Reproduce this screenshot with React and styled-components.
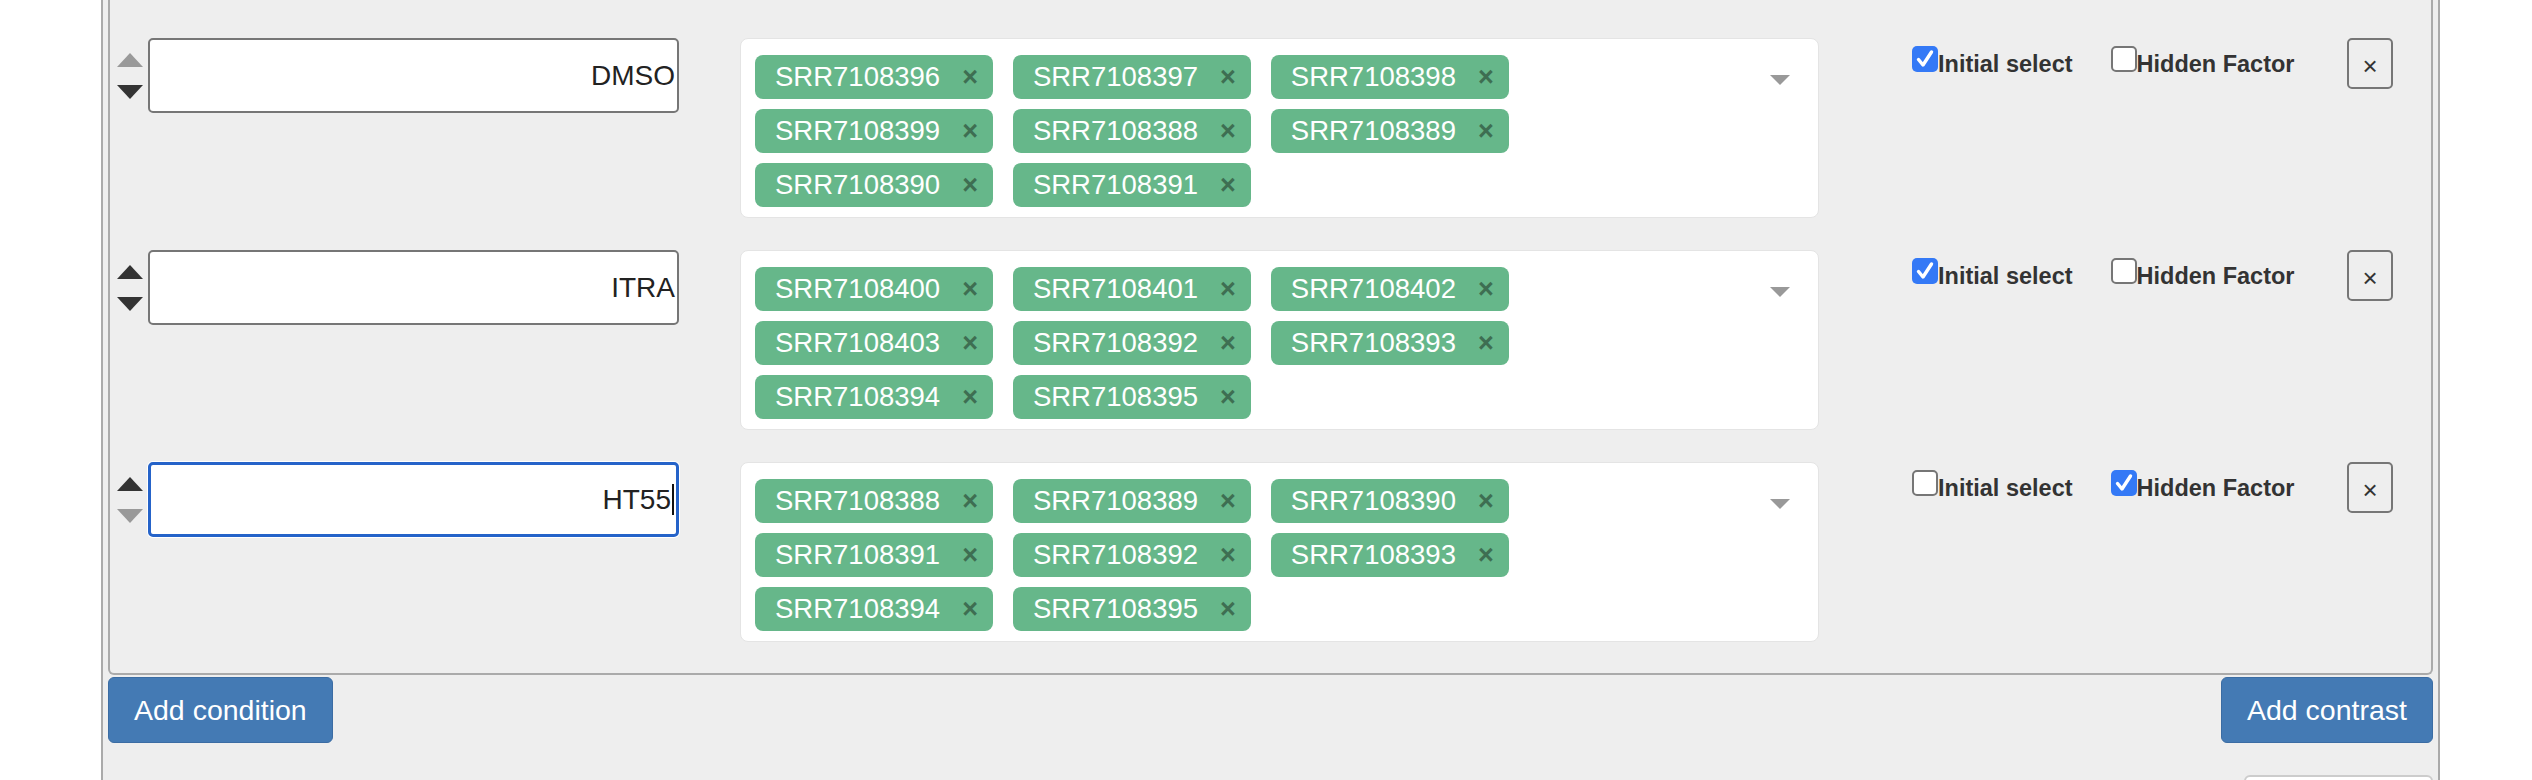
import React from 'react'
import styled, { createGlobalStyle } from 'styled-components'

const GlobalStyle = createGlobalStyle`
  body {
    margin: 0;
    background: #fff;
    font-family: 'Liberation Sans', Arial, sans-serif;
  }
`

const Page = styled.div`
  padding-left: 101px;
`

const Outer = styled.div`
  width: 2339px;
  min-height: 780px;
  box-sizing: border-box;
  border-left: 2px solid #aaa;
  border-right: 2px solid #aaa;
  background: #eee;
  padding: 0 5px;
`

const Panel = styled.div`
  border: 2px solid #aaa;
  border-top: none;
  border-radius: 0 0 6px 6px;
  padding: 38px 38px 31px 7px;
  display: flex;
  flex-direction: column;
  gap: 32px;
`

const Row = styled.div`
  display: flex;
  align-items: flex-start;
`

const Arrows = styled.div`
  width: 26px;
  flex-shrink: 0;
  display: flex;
  flex-direction: column;
  gap: 18px;
  padding-top: 15px;
`

const Arrow = styled.svg`
  display: block;
  width: 26px;
  height: 14px;
  fill: ${p => (p.$off ? '#999' : '#333')};
`

const Field = styled.div`
  margin-left: 5px;
  width: 531px;
  height: 75px;
  flex-shrink: 0;
  box-sizing: border-box;
  background: #fff;
  border: ${p => (p.$focus ? '3px solid #2563c9' : '2px solid #767676')};
  border-radius: 5px;
  box-shadow: ${p => (p.$focus ? '0 0 0 1px #fff' : 'none')};
  display: flex;
  align-items: center;
  justify-content: flex-end;
  padding-right: 2px;
  font-size: 28px;
  color: #222;
`

const Caret = styled.span`
  display: inline-block;
  width: 2px;
  height: 31px;
  background: #111;
  margin-left: 1px;
`

const Select = styled.div`
  margin-left: 61px;
  width: 1079px;
  flex-shrink: 0;
  box-sizing: border-box;
  background: #fff;
  border: 1px solid #e4e4e4;
  border-radius: 8px;
  padding: 16px 28px 10px 14px;
  display: flex;
  justify-content: space-between;
  align-items: flex-start;
`

const Tags = styled.div`
  width: 760px;
  display: flex;
  flex-wrap: wrap;
  gap: 10px 20px;
`

const Tag = styled.span`
  height: 44px;
  box-sizing: border-box;
  display: inline-flex;
  align-items: center;
  padding: 0 15px 0 20px;
  background: #66b78a;
  border-radius: 8px;
  color: #fff;
  font-size: 27.5px;
`

const TagX = styled.span`
  margin-left: 22px;
  font-size: 27px;
  font-weight: bold;
  color: #3e6e52;
`

const Caretdown = styled.svg`
  width: 20px;
  height: 10px;
  margin-top: 20px;
  fill: #999;
`

const Checks = styled.div`
  margin-left: 93px;
  margin-top: 8px;
  width: 381px;
  flex-shrink: 0;
  display: flex;
  gap: 38px;
`

const Label = styled.label`
  display: inline-flex;
  align-items: flex-end;
  white-space: nowrap;
  flex-shrink: 0;
  font-size: 23.5px;
  line-height: 26px;
  font-weight: bold;
  color: #333;
`

const Box = styled.span`
  width: 26px;
  height: 26px;
  margin-bottom: 5px;
  flex-shrink: 0;
  box-sizing: border-box;
  border-radius: 5px;
  background: ${p => (p.$on ? '#3479f6' : '#fff')};
  border: ${p => (p.$on ? 'none' : '2px solid #767676')};
  display: flex;
  align-items: center;
  justify-content: center;
`

const RemoveButton = styled.button`
  margin-left: 54px;
  width: 46px;
  height: 51px;
  flex-shrink: 0;
  padding: 6px 0 0;
  background: transparent;
  border: 2px solid #767676;
  border-radius: 5px;
  font-family: 'Liberation Sans', Arial, sans-serif;
  font-size: 26px;
  color: #333;
`

const Footer = styled.div`
  display: flex;
  justify-content: space-between;
  margin-top: 2px;
`

const Button = styled.button`
  height: 66px;
  padding: 0 25px;
  background: #447ab4;
  border: 1px solid #3b6ca3;
  border-radius: 6px;
  color: #fff;
  font-family: 'Liberation Sans', Arial, sans-serif;
  font-size: 28.5px;
`

const Next = styled.div`
  display: flex;
  justify-content: flex-end;
  margin-top: 32px;
`

const GhostButton = styled.button`
  width: 189px;
  height: 50px;
  background: #fff;
  border: 2px solid #ccc;
  border-radius: 6px;
`

const conditions = [
  {
    name: 'DMSO',
    samples: ['SRR7108396', 'SRR7108397', 'SRR7108398', 'SRR7108399', 'SRR7108388', 'SRR7108389', 'SRR7108390', 'SRR7108391'],
    initial: true,
    hidden: false,
  },
  {
    name: 'ITRA',
    samples: ['SRR7108400', 'SRR7108401', 'SRR7108402', 'SRR7108403', 'SRR7108392', 'SRR7108393', 'SRR7108394', 'SRR7108395'],
    initial: true,
    hidden: false,
  },
  {
    name: 'HT55',
    samples: ['SRR7108388', 'SRR7108389', 'SRR7108390', 'SRR7108391', 'SRR7108392', 'SRR7108393', 'SRR7108394', 'SRR7108395'],
    initial: false,
    hidden: true,
    focus: true,
  },
]

const Check = ({ on, children }) => (
  <Label>
    <Box $on={on}>
      {on && (
        <svg width='20' height='20' viewBox='0 0 20 20' style={{ display: 'block' }}>
          <path d='M3.5 10.5 L8 16 L16.5 3' stroke='#fff' strokeWidth='3.4' fill='none' strokeLinecap='round' strokeLinejoin='round' />
        </svg>
      )}
    </Box>
    <span>{children}</span>
  </Label>
)

const ConditionRow = ({ c, first, last }) => (
  <Row>
    <Arrows>
      <Arrow $off={first} viewBox='0 0 26 14'>
        <polygon points='13,0 26,14 0,14' />
      </Arrow>
      <Arrow $off={last} viewBox='0 0 26 14'>
        <polygon points='0,0 26,0 13,14' />
      </Arrow>
    </Arrows>
    <Field $focus={c.focus}>
      {c.name}
      {c.focus && <Caret />}
    </Field>
    <Select>
      <Tags>
        {c.samples.map(s => (
          <Tag key={s}>
            {s}
            <TagX>×</TagX>
          </Tag>
        ))}
      </Tags>
      <Caretdown viewBox='0 0 20 10'>
        <polygon points='0,0 20,0 10,10' />
      </Caretdown>
    </Select>
    <Checks>
      <Check on={c.initial}>Initial select</Check>
      <Check on={c.hidden}>Hidden Factor</Check>
    </Checks>
    <RemoveButton>×</RemoveButton>
  </Row>
)

const App = () => {
  return (
    <Page>
      <GlobalStyle />
      <Outer>
        <Panel>
          {conditions.map((c, i) => (
            <ConditionRow key={c.name} c={c} first={i === 0} last={i === conditions.length - 1} />
          ))}
        </Panel>
        <Footer>
          <Button>Add condition</Button>
          <Button>Add contrast</Button>
        </Footer>
        <Next>
          <GhostButton />
        </Next>
      </Outer>
    </Page>
  )
}

export default App
